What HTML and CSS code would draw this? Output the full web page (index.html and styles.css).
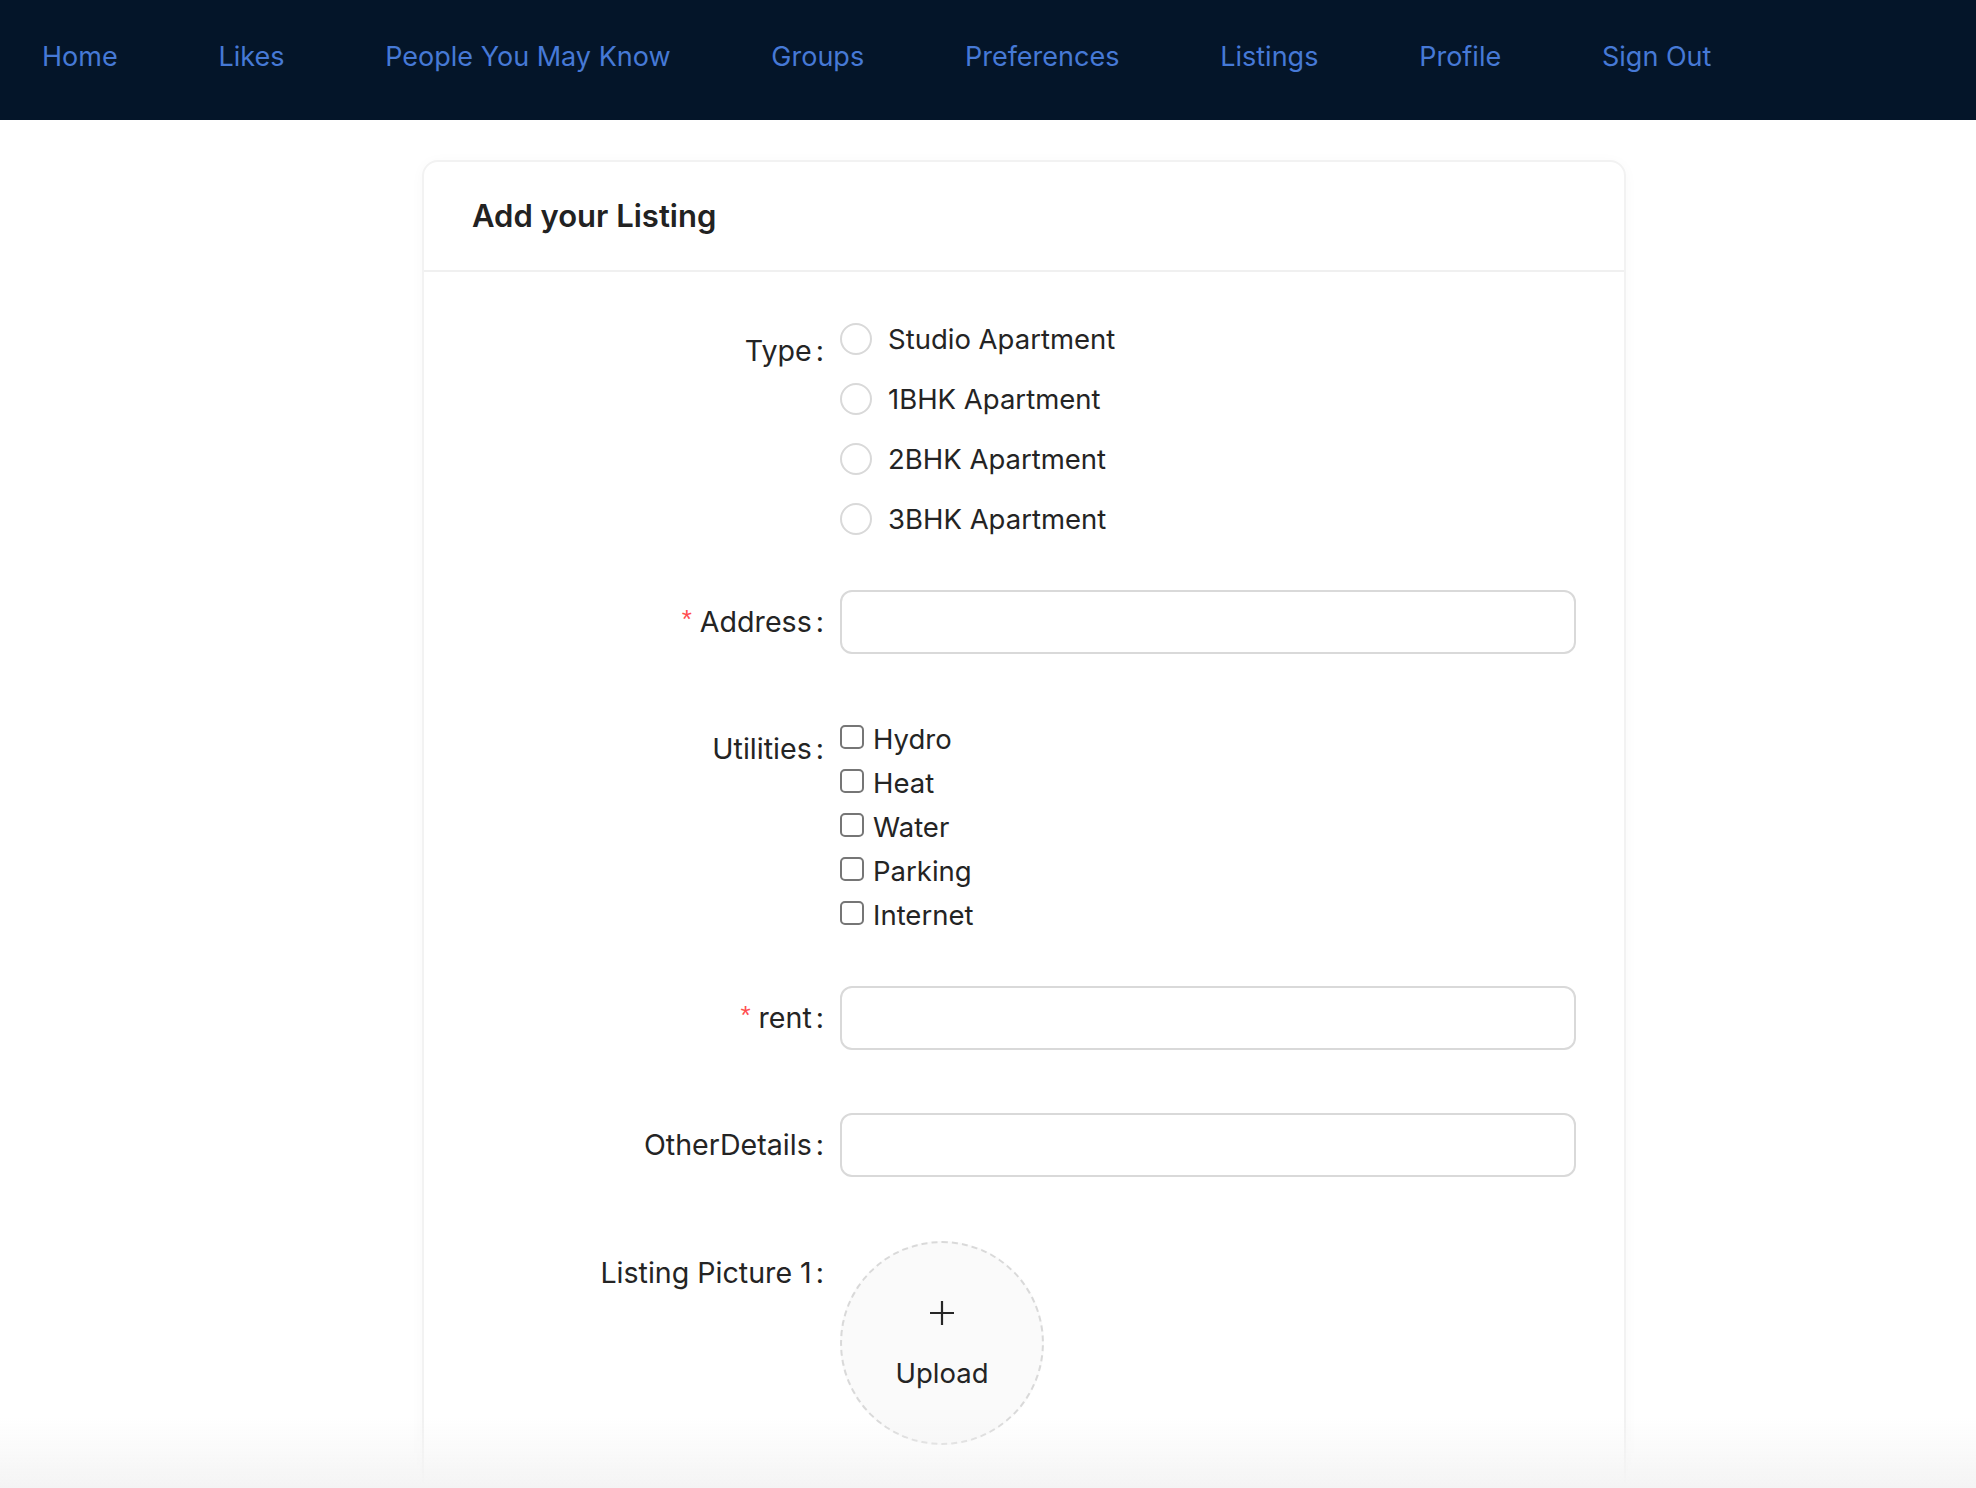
FILE: index.html
```html
<!DOCTYPE html>
<html lang="en">
<head>
<meta charset="utf-8">
<title>Add your Listing</title>
<link rel="stylesheet" href="styles.css">
</head>
<body>
<nav class="topnav">
  <a href="#">Home</a>
  <a href="#">Likes</a>
  <a href="#">People You May Know</a>
  <a href="#">Groups</a>
  <a href="#">Preferences</a>
  <a href="#">Listings</a>
  <a href="#">Profile</a>
  <a href="#">Sign Out</a>
</nav>
<main class="page">
  <section class="card">
    <header class="card-head"><h2 class="card-title">Add your Listing</h2></header>
    <div class="card-body">
      <form class="form">
        <div class="form-item item-type">
          <div class="label"><label>Type</label></div>
          <div class="control">
            <div class="radio-group">
              <label class="radio"><span class="radio-dot"></span><span class="radio-text">Studio Apartment</span></label>
              <label class="radio"><span class="radio-dot"></span><span class="radio-text">1BHK Apartment</span></label>
              <label class="radio"><span class="radio-dot"></span><span class="radio-text">2BHK Apartment</span></label>
              <label class="radio"><span class="radio-dot"></span><span class="radio-text">3BHK Apartment</span></label>
            </div>
          </div>
        </div>
        <div class="form-item item-input item-gap-lg">
          <div class="label"><label class="required">Address</label></div>
          <div class="control"><span class="input"></span></div>
        </div>
        <div class="form-item item-checks">
          <div class="label"><label>Utilities</label></div>
          <div class="control">
            <label class="check"><span class="check-box"></span><span>Hydro</span></label>
            <label class="check"><span class="check-box"></span><span>Heat</span></label>
            <label class="check"><span class="check-box"></span><span>Water</span></label>
            <label class="check"><span class="check-box"></span><span>Parking</span></label>
            <label class="check"><span class="check-box"></span><span>Internet</span></label>
          </div>
        </div>
        <div class="form-item item-input item-gap-lg">
          <div class="label"><label class="required">rent</label></div>
          <div class="control"><span class="input"></span></div>
        </div>
        <div class="form-item item-input item-gap-xl">
          <div class="label"><label>OtherDetails</label></div>
          <div class="control"><span class="input"></span></div>
        </div>
        <div class="form-item item-upload">
          <div class="label"><label>Listing Picture 1</label></div>
          <div class="control">
            <div class="upload">
              <svg class="upload-plus" viewBox="0 0 28 28" width="28" height="28" aria-hidden="true">
                <path d="M14 2v24M2 14h24" stroke="#262626" stroke-width="2.2" fill="none"/>
              </svg>
              <span class="upload-text">Upload</span>
            </div>
          </div>
        </div>
      </form>
    </div>
  </section>
</main>
<div class="bottom-fade"></div>
</body>
</html>
```
FILE: styles.css
```css
* { box-sizing: border-box; }
html, body { margin: 0; padding: 0; background: #fff; }
body {
  font-family: Inter, "Noto Sans", "Liberation Sans", sans-serif;
  font-size: 27.5px;
  color: #242424;
  overflow: hidden;
}

.topnav {
  height: 120px;
  background: #041529;
  display: flex;
  align-items: center;
  gap: 100.8px;
  padding: 0 0 6px 42px;
}
.topnav a {
  color: #4679d6;
  text-decoration: none;
  font-size: 27px;
  line-height: 40px;
}

.page {
  padding: 40px 0 0 422px;
}
.card {
  width: 1204px;
  border: 2px solid #f2f2f2;
  border-radius: 16px;
  background: #fff;
  box-shadow: 0 2px 14px rgba(0, 0, 0, 0.03);
  min-height: 1400px;
}
.card-head {
  height: 110px;
  border-bottom: 2px solid #f0f0f0;
  display: flex;
  align-items: center;
  padding: 0 48px 2px;
}
.card-title {
  margin: 0;
  font-size: 31px;
  font-weight: 600;
  color: #222;
}
.card-body {
  padding: 47px 48px;
}

.form-item {
  display: grid;
  grid-template-columns: 1fr 2fr;
}
.label {
  text-align: right;
  line-height: 64px;
  height: 64px;
  white-space: nowrap;
  font-size: 28.6px;
}
.label label::after {
  content: ":";
  margin: 0 16px 0 4px;
}
.label .required::before {
  content: "*";
  color: #ff4d4f;
  font-family: "Liberation Sans", sans-serif;
  font-size: 26px;
  margin-right: 8px;
  position: relative;
  top: -4px;
}

.item-type { margin-bottom: 41px; }
.radio-group { margin-top: -10px; }
.radio {
  display: flex;
  align-items: center;
  height: 60px;
}
.radio-dot {
  width: 32px;
  height: 32px;
  border: 2px solid #d9d9d9;
  border-radius: 50%;
  background: #fff;
  flex: none;
}
.radio-text { padding-left: 16px; }

.item-input .input {
  display: block;
  height: 64px;
  border: 2px solid #d9d9d9;
  border-radius: 12px;
  background: #fff;
}
.item-gap-lg { margin-bottom: 63px; }
.item-gap-xl { margin-bottom: 64px; }

.item-checks { margin-bottom: 49px; }
.check {
  display: flex;
  align-items: center;
  height: 44px;
  gap: 9px;
}
.check-box {
  width: 24px;
  height: 24px;
  border: 2px solid #767676;
  border-radius: 5px;
  background: #fff;
  flex: none;
  position: relative;
  top: -2px;
}

.upload {
  width: 204px;
  height: 204px;
  border-radius: 50%;
  border: 2px dashed #d9d9d9;
  background: #fafafa;
  display: flex;
  flex-direction: column;
  align-items: center;
  padding-top: 56px;
}
.upload-plus { display: block; }
.upload-text {
  margin-top: 28px;
  line-height: 36px;
}

.bottom-fade {
  position: fixed;
  left: 0;
  right: 0;
  bottom: 0;
  height: 70px;
  background: linear-gradient(to bottom, rgba(244, 244, 244, 0), rgba(244, 244, 244, 1));
  pointer-events: none;
}
```
